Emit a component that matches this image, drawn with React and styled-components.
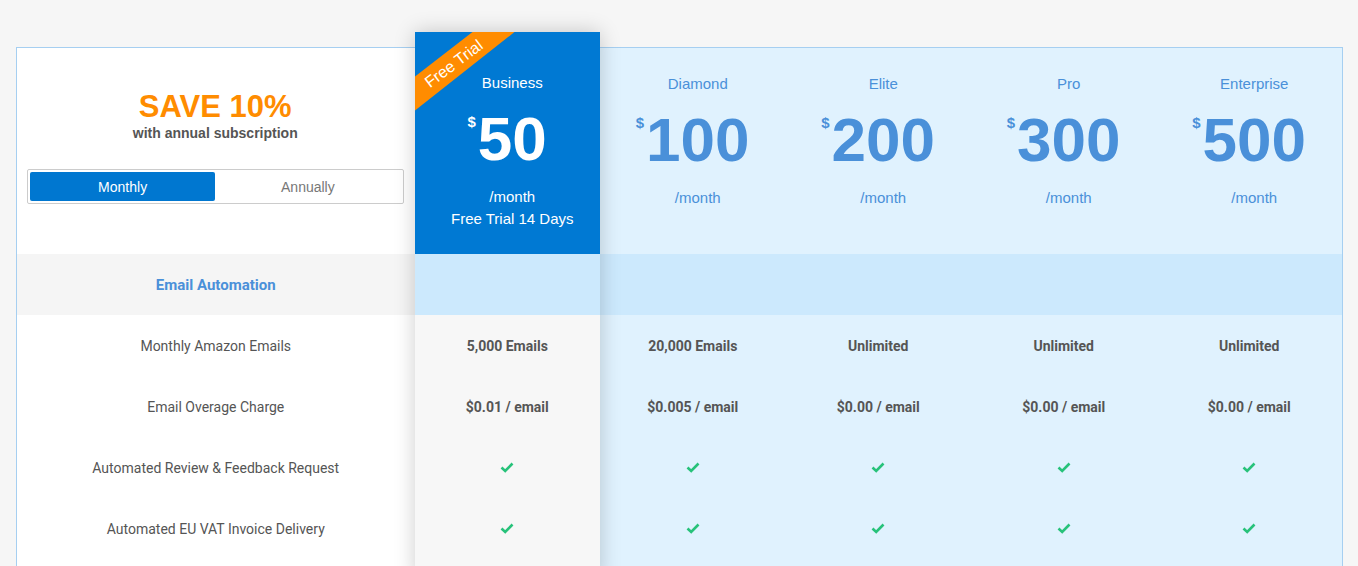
import React, { useState } from "react";
import styled, { createGlobalStyle } from "styled-components";

const GlobalStyle = createGlobalStyle`
  body {
    margin: 0;
    background: #f6f6f6;
    font-family: "Liberation Sans", Arial, sans-serif;
  }
`;

const Page = styled.div`
  padding: 47px 15px 0 16px;
`;

const Table = styled.div`
  display: flex;
  border: 1px solid #a6cff1;
  border-bottom: none;
  background: #e0f2fe;
`;

const Column = styled.div`
  display: flex;
  flex-direction: column;
  width: ${(p) => (p.$wide ? "30%" : "14%")};
  background: ${(p) => (p.$wide ? "#fff" : p.$featured ? "#f7f7f7" : "#e0f2fe")};
  padding-bottom: 20px;
  position: relative;
  z-index: ${(p) => (p.$featured ? 2 : 1)};
  margin-top: ${(p) => (p.$featured ? "-16px" : "0")};
  box-shadow: ${(p) => (p.$featured ? "0 0 20px rgba(0, 0, 0, 0.2)" : "none")};
`;

const SideHeader = styled.div`
  height: 206px;
  display: flex;
  flex-direction: column;
  align-items: center;
  padding: 0 11px 0 10px;
`;

const Save = styled.div`
  margin-top: 42px;
  font-size: 31px;
  line-height: 34px;
  font-weight: 700;
  color: #ff8c00;
`;

const SaveNote = styled.div`
  margin-top: 1px;
  font-size: 14px;
  line-height: 16px;
  font-weight: 700;
  color: #555;
`;

const Toggle = styled.div`
  margin-top: 28px;
  align-self: stretch;
  display: flex;
  padding: 2px;
  border: 1px solid #ccc;
  border-radius: 2px;
`;

const ToggleButton = styled.button`
  flex: 1;
  height: 29px;
  border: none;
  border-radius: 2px;
  font-family: "Liberation Sans", Arial, sans-serif;
  font-size: 14px;
  cursor: pointer;
  background: ${(p) => (p.$active ? "#0077d0" : "transparent")};
  color: ${(p) => (p.$active ? "#fff" : "#777")};
`;

const PlanHeader = styled.div`
  position: relative;
  overflow: hidden;
  height: ${(p) => (p.$featured ? "222px" : "206px")};
  padding: ${(p) => (p.$featured ? "41px" : "26px")} 0 0 10px;
  box-sizing: border-box;
  display: flex;
  flex-direction: column;
  align-items: center;
  background: ${(p) => (p.$featured ? "#0079d3" : "transparent")};
  color: ${(p) => (p.$featured ? "#fff" : "#4a90d9")};
`;

const Ribbon = styled.div`
  position: absolute;
  left: 0;
  top: 0;
  width: 100px;
  height: 80px;
  background: #ff8c00;
  clip-path: polygon(58px 0, 100px 0, 0 79px, 0 45px);
`;

const RibbonText = styled.span`
  position: absolute;
  left: 39px;
  top: 32px;
  font-size: 16px;
  line-height: 18px;
  color: #fff;
  transform: translate(-50%, -50%) rotate(-37deg);
  white-space: nowrap;
`;

const PlanName = styled.div`
  font-size: 15px;
  line-height: 20px;
`;

const Price = styled.div`
  position: relative;
  margin-top: 15px;
  font-size: 62px;
  line-height: 62px;
  font-weight: 700;
`;

const Dollar = styled.span`
  position: absolute;
  right: 100%;
  top: 6px;
  margin-right: 2px;
  font-size: 15px;
  line-height: 15px;
`;

const Period = styled.div`
  margin-top: ${(p) => (p.$tight ? "0" : "16px")};
  font-size: 15px;
  line-height: 22px;
`;

const Cell = styled.div`
  height: 61px;
  display: flex;
  align-items: center;
  justify-content: center;
  font-family: Roboto, "Liberation Sans", sans-serif;
  font-size: 14px;
  color: #555;
  font-weight: ${(p) => (p.$value ? 700 : 400)};
`;

const SectionCell = styled(Cell)`
  background: ${(p) => (p.$side ? "#f5f5f5" : "#cce9fd")};
  color: #4a90d9;
  font-size: 15px;
  font-weight: 700;
`;

const Check = () => (
  <svg width="14" height="11" viewBox="0 0 14 11">
    <path d="M1.5 5.5 L5.2 9 L12.5 1.5" fill="none" stroke="#27c27a" strokeWidth="2.6" />
  </svg>
);

const features = ["Monthly Amazon Emails", "Email Overage Charge", "Automated Review & Feedback Request", "Automated EU VAT Invoice Delivery"];

const plans = [
  { name: "Business", price: 50, emails: "5,000 Emails", overage: "$0.01 / email", featured: true },
  { name: "Diamond", price: 100, emails: "20,000 Emails", overage: "$0.005 / email" },
  { name: "Elite", price: 200, emails: "Unlimited", overage: "$0.00 / email" },
  { name: "Pro", price: 300, emails: "Unlimited", overage: "$0.00 / email" },
  { name: "Enterprise", price: 500, emails: "Unlimited", overage: "$0.00 / email" },
];

const App = () => {
  const [billing, setBilling] = useState("monthly");

  return (
    <Page>
      <GlobalStyle />
      <Table>
        <Column $wide>
          <SideHeader>
            <Save>SAVE 10%</Save>
            <SaveNote>with annual subscription</SaveNote>
            <Toggle>
              <ToggleButton $active={billing === "monthly"} onClick={() => setBilling("monthly")}>
                Monthly
              </ToggleButton>
              <ToggleButton $active={billing === "annually"} onClick={() => setBilling("annually")}>
                Annually
              </ToggleButton>
            </Toggle>
          </SideHeader>
          <SectionCell $side>Email Automation</SectionCell>
          {features.map((f) => (
            <Cell key={f}>{f}</Cell>
          ))}
        </Column>
        {plans.map((plan) => (
          <Column key={plan.name} $featured={plan.featured}>
            <PlanHeader $featured={plan.featured}>
              {plan.featured && (
                <Ribbon>
                  <RibbonText>Free Trial</RibbonText>
                </Ribbon>
              )}
              <PlanName>{plan.name}</PlanName>
              <Price>
                <Dollar>$</Dollar>
                {plan.price}
              </Price>
              <Period>/month</Period>
              {plan.featured && <Period $tight>Free Trial 14 Days</Period>}
            </PlanHeader>
            <SectionCell />
            <Cell $value>{plan.emails}</Cell>
            <Cell $value>{plan.overage}</Cell>
            <Cell>
              <Check />
            </Cell>
            <Cell>
              <Check />
            </Cell>
          </Column>
        ))}
      </Table>
    </Page>
  );
};

export default App;
